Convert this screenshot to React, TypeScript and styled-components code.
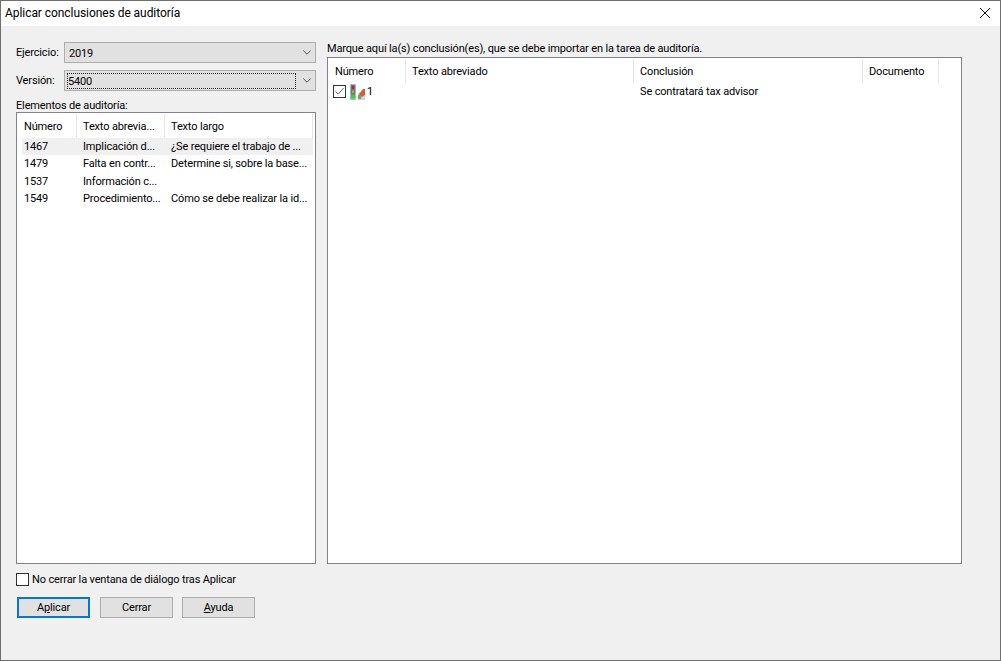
import React from 'react'
import styled, { createGlobalStyle } from 'styled-components'

const leftCols = [60, 88, 148]
const rightCols = [78, 228, 229, 76]

const auditRows = [
  { id: '1467', short: 'Implicación d...', long: '¿Se requiere el trabajo de ...', selected: true },
  { id: '1479', short: 'Falta en contr...', long: 'Determine si, sobre la base...' },
  { id: '1537', short: 'Información c...', long: '' },
  { id: '1549', short: 'Procedimiento...', long: 'Cómo se debe realizar la id...' },
]

const Global = createGlobalStyle`
  html, body {
    margin: 0;
    padding: 0;
    background: #f0f0f0;
  }
  body {
    font-family: Roboto, "Liberation Sans", sans-serif;
    font-size: 11px;
    letter-spacing: -0.15px;
    color: #000;
  }
`

const Dialog = styled.div`
  box-sizing: border-box;
  width: 1001px;
  height: 661px;
  border: 1px solid #6f6f6f;
  background: #f0f0f0;
  display: flex;
  flex-direction: column;
  overflow: hidden;
`

const TitleBar = styled.div`
  box-sizing: border-box;
  height: 25px;
  background: #fff;
  display: flex;
  align-items: center;
  justify-content: space-between;
  padding: 0 10px 2px 4px;
  flex: none;
`

const TitleText = styled.span`
  font-size: 12px;
  line-height: 16px;
  letter-spacing: -0.06px;
`

const CloseIcon = styled.svg`
  width: 10px;
  height: 10px;
  display: block;
`

const Body = styled.div`
  display: flex;
  gap: 11px;
  padding: 16px 0 0 15px;
`

const LeftColumn = styled.div`
  width: 300px;
  flex: none;
  display: flex;
  flex-direction: column;
`

const RightColumn = styled.div`
  width: 635px;
  flex: none;
  display: flex;
  flex-direction: column;
`

const Fields = styled.div`
  display: flex;
  flex-direction: column;
  gap: 7px;
  margin-bottom: 6px;
`

const FieldRow = styled.div`
  display: flex;
  align-items: center;
  height: 21px;
`

const FieldLabel = styled.span`
  width: 48px;
  flex: none;
  line-height: 18px;
`

const Combo = styled.div`
  box-sizing: border-box;
  flex: 1;
  height: 21px;
  background: #e1e1e1;
  border: 1px solid #adadad;
  display: flex;
  align-items: center;
  padding-left: 2px;
`

const ComboValue = styled.div<{ $focused?: boolean }>`
  box-sizing: border-box;
  flex: 1;
  height: 16px;
  line-height: 17px;
  padding-left: ${(p) => (p.$focused ? '1px' : '2px')};
  outline: ${(p) => (p.$focused ? '1px dotted #222' : 'none')};
  outline-offset: -1px;
`

const ComboArrow = styled.svg`
  width: 8px;
  height: 5px;
  margin: 0 4px 0 7px;
  flex: none;
`

const SectionLabel = styled.div<{ $line: number }>`
  height: 15px;
  line-height: ${(p) => p.$line}px;
  white-space: nowrap;
`

const ListBox = styled.div<{ $height: number }>`
  box-sizing: border-box;
  height: ${(p) => p.$height}px;
  background: #fff;
  border: 1px solid #82828c;
  padding-top: 1px;
`

const HeaderRow = styled.div`
  display: flex;
  height: 24px;
`

const HeaderCell = styled.div<{ $width: number }>`
  box-sizing: border-box;
  width: ${(p) => p.$width}px;
  flex: none;
  padding-left: 6px;
  line-height: 26px;
  border-right: 1px solid #e5e5e5;
  white-space: nowrap;
  &:first-child {
    padding-left: 7px;
  }
`

const LeftRows = styled.div`
  padding-left: 5px;
  width: 291px;
`

const AuditRow = styled.div<{ $selected?: boolean }>`
  display: flex;
  height: 17.33px;
  line-height: 17px;
  background: ${(p) => (p.$selected ? '#f0f0f0' : 'transparent')};
  white-space: nowrap;
`

const Cell = styled.div<{ $width: number; $pad: number }>`
  box-sizing: border-box;
  width: ${(p) => p.$width}px;
  flex: none;
  padding-left: ${(p) => p.$pad}px;
`

const ConclusionRow = styled.div`
  display: flex;
  align-items: center;
  height: 17px;
  padding-left: 5px;
`

const TreeCell = styled.div`
  width: 307px;
  flex: none;
  display: flex;
  align-items: center;
`

const CheckMark = styled.span`
  box-sizing: border-box;
  width: 13px;
  height: 13px;
  border: 1px solid #333;
  background: #fff;
  display: flex;
  align-items: center;
  justify-content: center;
  flex: none;
`

const StatusIcon = styled.svg`
  width: 16px;
  height: 16px;
  margin: 0 2px 0 3px;
  flex: none;
`

const OptionRow = styled.label`
  display: flex;
  align-items: center;
  gap: 3px;
  height: 13px;
  margin-top: 9px;
  white-space: nowrap;
`

const ButtonRow = styled.div`
  display: flex;
  margin: 11px 0 0 1px;
`

const DialogButton = styled.button<{ $primary?: boolean; $gapLeft?: number }>`
  all: unset;
  box-sizing: border-box;
  width: 73px;
  height: 21px;
  margin-left: ${(p) => p.$gapLeft ?? 0}px;
  text-align: center;
  line-height: ${(p) => (p.$primary ? '17px' : '19px')};
  background: #e1e1e1;
  border: ${(p) => (p.$primary ? '2px solid #0078d7' : '1px solid #adadad')};
  font-size: 11px;
`

function CheckBox({ checked }: { checked?: boolean }) {
  return (
    <CheckMark>
      {checked && (
        <svg width="11" height="11" viewBox="0 0 11 11">
          <path d="M1.5 5.5 L4.2 8.2 L9.6 2" fill="none" stroke="#666" strokeWidth="1" />
        </svg>
      )}
    </CheckMark>
  )
}

function Chevron() {
  return (
    <ComboArrow viewBox="0 0 8 5">
      <path d="M0.3 0.5 L4 4.2 L7.7 0.5" fill="none" stroke="#555" strokeWidth="1" />
    </ComboArrow>
  )
}

function TrafficIcon() {
  return (
    <StatusIcon viewBox="0 0 16 16">
      <rect x="1" y="0" width="6" height="16" rx="1" fill="#aeb4b8" />
      <rect x="2" y="1" width="4" height="13" fill="#6f7478" />
      <rect x="3" y="2" width="2" height="3" fill="#b5262a" />
      <rect x="3" y="6.5" width="2" height="2.5" fill="#b8a83c" />
      <rect x="2" y="10.5" width="4" height="4" fill="#1fe02a" />
      <rect x="9" y="9" width="7" height="7" fill="#c4d4e4" />
      <path d="M10 10 L14 5 L16 5 L16 11 L12.5 13 Z" fill="#dd5a30" />
      <rect x="9" y="11" width="3" height="4" fill="#56ad66" />
    </StatusIcon>
  )
}

export default function App() {
  return (
    <>
      <Global />
      <Dialog>
        <TitleBar>
          <TitleText>Aplicar conclusiones de auditoría</TitleText>
          <CloseIcon viewBox="0 0 10 10">
            <path d="M0 0 L10 10 M10 0 L0 10" stroke="#111" strokeWidth="1" />
          </CloseIcon>
        </TitleBar>
        <Body>
          <LeftColumn>
            <Fields>
              <FieldRow>
                <FieldLabel>Ejercicio:</FieldLabel>
                <Combo>
                  <ComboValue>2019</ComboValue>
                  <Chevron />
                </Combo>
              </FieldRow>
              <FieldRow>
                <FieldLabel>Versión:</FieldLabel>
                <Combo>
                  <ComboValue $focused>5400</ComboValue>
                  <Chevron />
                </Combo>
              </FieldRow>
            </Fields>
            <SectionLabel $line={17}>Elementos de auditoría:</SectionLabel>
            <ListBox $height={452}>
              <HeaderRow>
                <HeaderCell $width={leftCols[0]}>Número</HeaderCell>
                <HeaderCell $width={leftCols[1]}>Texto abrevia...</HeaderCell>
                <HeaderCell $width={leftCols[2]}>Texto largo</HeaderCell>
              </HeaderRow>
              <LeftRows>
                {auditRows.map((row) => (
                  <AuditRow key={row.id} $selected={row.selected}>
                    <Cell $width={55} $pad={2}>{row.id}</Cell>
                    <Cell $width={88} $pad={6}>{row.short}</Cell>
                    <Cell $width={148} $pad={6}>{row.long}</Cell>
                  </AuditRow>
                ))}
              </LeftRows>
            </ListBox>
            <OptionRow>
              <CheckBox />
              No cerrar la ventana de diálogo tras Aplicar
            </OptionRow>
            <ButtonRow>
              <DialogButton $primary>
                A<u>p</u>licar
              </DialogButton>
              <DialogButton $gapLeft={10}>Cerrar</DialogButton>
              <DialogButton $gapLeft={9}>
                <u>A</u>yuda
              </DialogButton>
            </ButtonRow>
          </LeftColumn>
          <RightColumn>
            <SectionLabel $line={13}>Marque aquí la(s) conclusión(es), que se debe importar en la tarea de auditoría.</SectionLabel>
            <ListBox $height={507}>
              <HeaderRow>
                {['Número', 'Texto abreviado', 'Conclusión', 'Documento'].map((label, i) => (
                  <HeaderCell key={label} $width={rightCols[i]}>
                    {label}
                  </HeaderCell>
                ))}
              </HeaderRow>
              <ConclusionRow>
                <TreeCell>
                  <CheckBox checked />
                  <TrafficIcon />1
                </TreeCell>
                <span>Se contratará tax advisor</span>
              </ConclusionRow>
            </ListBox>
          </RightColumn>
        </Body>
      </Dialog>
    </>
  )
}
